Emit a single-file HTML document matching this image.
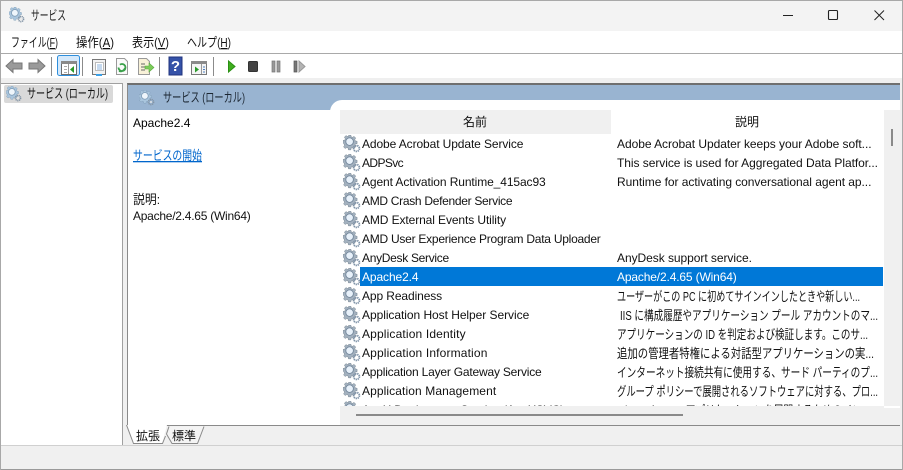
<!DOCTYPE html>
<html lang="ja"><head><meta charset="utf-8"><title>サービス</title>
<style>
html,body{margin:0;padding:0;width:903px;height:470px;overflow:hidden;background:#f0f0f0}
body{position:relative;font:12px/16px "Liberation Sans","Noto Sans CJK JP",sans-serif;color:#111}
.a{position:absolute;white-space:nowrap}
.b{position:absolute}
svg{position:absolute;overflow:visible}
svg text{font-family:"Liberation Sans","Noto Sans CJK JP",sans-serif;font-size:12px;fill:#111}
svg.jp{overflow:hidden;left:0;top:0}
svg.jp text{font-size:13px}
.row{position:absolute;left:0;width:543px;height:19px;line-height:19px}
.row svg{left:3px;top:1px}
.n{position:absolute;left:22px;top:1px;white-space:nowrap;letter-spacing:-.1px}
.d{position:absolute;left:277px;top:1px;white-space:nowrap;width:266px;overflow:hidden;letter-spacing:-.05px}
.sel{background:#0078d7;position:absolute;left:20px;top:0;width:523px;height:19px}
</style></head><body>
<svg width="0" height="0" style="position:absolute"><defs>
<symbol id="g" viewBox="0 0 18 18">
<path d="M6.800 0h3l.4 2.200 1.700.7 1.900-1.200 2.100 2.100-1.200 1.900.7 1.700 2.200.4v3l-2.200.4-.7 1.700 1.200 1.900-2.100 2.100-1.900-1.200-1.700.7-.4 2.200h-3l-.4-2.200-1.700-.7-1.900 1.200-2.100-2.100 1.200-1.900-.7-1.700L0 9.800v-3l2.200-.4.7-1.700-1.200-1.900 2.100-2.100 1.900 1.200 1.700-.7z" transform="scale(.8)" fill="#a3b1bf" stroke="#75848f" stroke-width=".6"/>
<circle cx="6.600" cy="6.600" r="3.800" fill="#e8f1fa" stroke="#73879b" stroke-width=".9"/>
<circle cx="13.500" cy="13.500" r="2.900" fill="none" stroke="#7f93a8" stroke-width="1.800" stroke-dasharray="1.300 .7"/>
<circle cx="13.500" cy="13.500" r="1.100" fill="#fff"/>
</symbol>
<symbol id="gl" viewBox="0 0 18 18">
<path d="M6.800 0h3l.4 2.200 1.700.7 1.900-1.200 2.100 2.100-1.200 1.900.7 1.700 2.200.4v3l-2.200.4-.7 1.700 1.200 1.900-2.100 2.100-1.900-1.200-1.700.7-.4 2.200h-3l-.4-2.200-1.700-.7-1.900 1.200-2.100-2.100 1.200-1.900-.7-1.700L0 9.800v-3l2.200-.4.7-1.700-1.200-1.900 2.100-2.100 1.900 1.200 1.700-.7z" transform="scale(.8)" fill="#a9c5dd" stroke="#7f9cb6" stroke-width=".6"/>
<circle cx="6.600" cy="6.600" r="3.800" fill="#eef5fb" stroke="#7d9ab4" stroke-width=".9"/>
<circle cx="13.500" cy="13.500" r="2.900" fill="none" stroke="#8394a5" stroke-width="1.800" stroke-dasharray="1.300 .7"/>
<circle cx="13.500" cy="13.500" r="1.100" fill="#e6e6e6"/>
</symbol>
</defs></svg>

<!-- window frame / title bar -->
<div class="b" style="left:0;top:0;width:903px;height:31px;background:#f3f3f3"></div>
<svg style="left:9px;top:7px" width="16" height="16"><use href="#gl" width="16" height="16"/></svg>
<div class="b" style="left:0;top:0;width:903px;height:1px;background:#a8a8a8"></div>
<svg style="left:780px;top:0" width="123" height="31" fill="none" stroke="#222" stroke-width="1">
<path d="M3 15.500h10"/><rect x="48.500" y="10.500" width="9" height="9" rx="1" stroke-width="1.100"/><path d="M94.500 10.500l9.500 9.500M104 10.500l-9.500 9.500"/>
</svg>

<!-- menu -->
<div class="b" style="left:0;top:31px;width:903px;height:22px;background:#fff;border-bottom:1px solid #a9a9a9"></div>

<!-- toolbar -->
<div class="b" style="left:0;top:54px;width:903px;height:24px;background:#fff"></div>
<svg style="left:0;top:54px" width="330" height="24">
<path d="M6 12l7-6.500v3.500h9v6h-9v3.500z" fill="#9a9a9a" stroke="#777"/>
<path d="M45 12l-7-6.500v3.500h-9v6h9v3.500z" fill="#9a9a9a" stroke="#777"/>
<path d="M51.500 3v19M82.500 3v19M159.500 3v19M213.500 3v19" stroke="#8b8b8b"/>
<rect x="57.500" y="1.500" width="22" height="20" rx="2" fill="#d5e9fb" stroke="#2f8fdc"/>
<rect x="61.500" y="7.500" width="15" height="13" fill="#fff" stroke="#6d6d6d"/><rect x="61" y="7" width="16" height="3" fill="#8a8a8a"/>
<path d="M68.500 10v10" stroke="#999"/><path d="M74 12v7l-4-3.500z" fill="#2a9a2a"/>
<path d="M64 12.500h3M64 15.500h3M64 18.500h3" stroke="#aaa"/>
<rect x="92.500" y="5.500" width="13" height="15" fill="#f2f2f2" stroke="#777"/><rect x="95.500" y="8.500" width="8" height="8" fill="#fff" stroke="#bbb"/>
<path d="M97 11h5M97 13h5M97 15h5" stroke="#8eb3dd"/><rect x="96" y="20" width="6" height="2" fill="#3aa0e8"/>
<path d="M116.500 4.500h8l3 3v13h-11z" fill="#fafafa" stroke="#999"/>
<path d="M118.500 13.500a3.500 3.500 0 1 0 1.400-2.800M119 17a4.500 4.500 0 0 0 6-3" fill="none" stroke="#3aa04a" stroke-width="1.800"/>
<path d="M138.500 4.500h8l3 3v13h-11z" fill="#f8f1d8" stroke="#999"/>
<path d="M141 10h4M141 13h4M141 16h4" stroke="#666"/>
<path d="M145 12h4V9l5 4.500-5 4.500v-3h-4z" fill="#7ccc5a" stroke="#5aaa40" stroke-width=".6"/>
<rect x="169" y="3" width="13" height="18" fill="#3552a8" stroke="#20337c"/>
<text x="175.500" y="17" style="font-size:15px;font-weight:bold;fill:#fff" text-anchor="middle">?</text>
<rect x="191.500" y="7.500" width="15" height="13" fill="#f4f4f4" stroke="#777"/><rect x="191" y="7" width="16" height="3" fill="#8a8a8a"/>
<path d="M201.500 10v10" stroke="#999"/><path d="M195 12.500v6l4-3z" fill="#2a9a2a"/><path d="M203 13h2M203 15.500h2M203 18h2" stroke="#4d7fc0"/>
<path d="M228.500 7v11l6.500-5.500z" fill="#3fae1f" stroke="#2a8f14"/>
<rect x="248.500" y="7.500" width="9" height="10" rx="1" fill="#444" stroke="#333"/>
<path d="M272 7h3v11h-3zM277 7h3v11h-3z" fill="#999" stroke="#777" stroke-width=".7"/>
<path d="M294 7h3v11h-3z" fill="#777" stroke="#555" stroke-width=".7"/><path d="M299 7v11l6-5.500z" fill="#b4b4b4" stroke="#999"/>
</svg>

<div class="b" style="left:0;top:78px;width:903px;height:5px;background:#efefef"></div>

<!-- left tree -->
<div class="b" style="left:0;top:83px;width:123px;height:362px;background:#fff;border-top:1px solid #a0a0a0;border-right:1px solid #a0a0a0;box-sizing:border-box"></div>
<div class="b" style="left:4px;top:85px;width:109px;height:18px;background:#d9d9d9;border-radius:2px"></div>
<svg style="left:6px;top:86px" width="16" height="16"><use href="#gl" width="16" height="16"/></svg>

<!-- right panel -->
<div class="b" style="left:127px;top:83px;width:773px;height:342px;background:#fff;border-top:2px solid #6f6f6f;border-left:1px solid #8a8a8a;box-sizing:border-box"></div>
<div class="b" style="left:128px;top:85px;width:772px;height:25px;background:#99b4d1"></div>
<div class="b" style="left:330px;top:100px;width:570px;height:15px;background:#fff;border-radius:12px 0 0 0"></div>
<svg style="left:139px;top:90px" width="16" height="16"><use href="#gl" width="16" height="16"/></svg>

<div class="a" style="left:133px;top:115px;color:#000">Apache2.4</div>
<div class="a" style="left:133px;top:208px;letter-spacing:-.25px">Apache/2.4.65 (Win64)</div>

<!-- list header -->
<div class="b" style="left:340px;top:110px;width:271px;height:24px;background:#f0f0f0"></div>
<div class="b" style="left:612px;top:110px;width:271px;height:24px;background:#fff"></div>
<div class="a" style="left:463px;top:114px">名前</div>
<div class="a" style="left:735px;top:114px">説明</div>

<!-- rows -->
<div class="b" style="left:340px;top:134px;width:543px;height:272px;overflow:hidden">
<div class="row" style="top:0"><svg width="18" height="18"><use href="#g" width="18" height="18"/></svg><span class="n">Adobe Acrobat Update Service</span><span class="d">Adobe Acrobat Updater keeps your Adobe soft...</span></div>
<div class="row" style="top:19px"><svg width="18" height="18"><use href="#g" width="18" height="18"/></svg><span class="n" style="letter-spacing:-.6px">ADPSvc</span><span class="d">This service is used for Aggregated Data Platfor...</span></div>
<div class="row" style="top:38px"><svg width="18" height="18"><use href="#g" width="18" height="18"/></svg><span class="n">Agent Activation Runtime_415ac93</span><span class="d">Runtime for activating conversational agent ap...</span></div>
<div class="row" style="top:57px"><svg width="18" height="18"><use href="#g" width="18" height="18"/></svg><span class="n" style="letter-spacing:-.3px">AMD Crash Defender Service</span></div>
<div class="row" style="top:76px"><svg width="18" height="18"><use href="#g" width="18" height="18"/></svg><span class="n">AMD External Events Utility</span></div>
<div class="row" style="top:95px"><svg width="18" height="18"><use href="#g" width="18" height="18"/></svg><span class="n" style="letter-spacing:-.25px">AMD User Experience Program Data Uploader</span></div>
<div class="row" style="top:114px"><svg width="18" height="18"><use href="#g" width="18" height="18"/></svg><span class="n" style="letter-spacing:-.3px">AnyDesk Service</span><span class="d">AnyDesk support service.</span></div>
<div class="row" style="top:133px"><svg width="18" height="18"><use href="#g" width="18" height="18"/></svg><div class="sel"></div><span class="n" style="color:#fff">Apache2.4</span><span class="d" style="color:#fff;letter-spacing:-.15px">Apache/2.4.65 (Win64)</span></div>
<div class="row" style="top:152px"><svg width="18" height="18"><use href="#g" width="18" height="18"/></svg><span class="n">App Readiness</span></div>
<div class="row" style="top:171px"><svg width="18" height="18"><use href="#g" width="18" height="18"/></svg><span class="n" style="letter-spacing:-.05px">Application Host Helper Service</span></div>
<div class="row" style="top:190px"><svg width="18" height="18"><use href="#g" width="18" height="18"/></svg><span class="n" style="letter-spacing:.15px">Application Identity</span></div>
<div class="row" style="top:209px"><svg width="18" height="18"><use href="#g" width="18" height="18"/></svg><span class="n" style="letter-spacing:.15px">Application Information</span></div>
<div class="row" style="top:228px"><svg width="18" height="18"><use href="#g" width="18" height="18"/></svg><span class="n" style="letter-spacing:-.2px">Application Layer Gateway Service</span></div>
<div class="row" style="top:247px"><svg width="18" height="18"><use href="#g" width="18" height="18"/></svg><span class="n" style="letter-spacing:.1px">Application Management</span></div>
<div class="row" style="top:266px"><svg width="18" height="18"><use href="#g" width="18" height="18"/></svg><span class="n">AppX Deployment Service (AppXSVC)</span></div>
</div>

<!-- Japanese description text, fitted to reference widths -->
<svg class="jp" width="903" height="470">
<text x="617" y="301" textLength="243" lengthAdjust="spacingAndGlyphs">ユーザーがこの PC に初めてサインインしたときや新しい...</text>
<text x="620" y="320" textLength="258" lengthAdjust="spacingAndGlyphs">IIS に構成履歴やアプリケーション プール アカウントのマ...</text>
<text x="617" y="339" textLength="251" lengthAdjust="spacingAndGlyphs">アプリケーションの ID を判定および検証します。このサ...</text>
<text x="617" y="358" textLength="257" lengthAdjust="spacingAndGlyphs">追加の管理者特権による対話型アプリケーションの実...</text>
<text x="617" y="377" textLength="261" lengthAdjust="spacingAndGlyphs">インターネット接続共有に使用する、サード パーティのプ...</text>
<text x="617" y="396" textLength="261" lengthAdjust="spacingAndGlyphs">グループ ポリシーで展開されるソフトウェアに対する、プロ...</text>
<text x="617" y="415" textLength="253" lengthAdjust="spacingAndGlyphs">Microsoft Store アプリケーションを展開するためのイン...</text>
</svg>

<!-- scrollbars -->
<div class="b" style="left:884px;top:110px;width:16px;height:296px;background:#f0f0f0"></div>
<div class="b" style="left:891px;top:129px;width:2px;height:17px;background:#8a8a8a"></div>
<div class="b" style="left:340px;top:408px;width:560px;height:17px;background:#f0f0f0"></div>
<div class="b" style="left:340px;top:406px;width:544px;height:2px;background:#f0f0f0"></div>
<div class="b" style="left:356px;top:414px;width:327px;height:2px;background:#8a8a8a"></div>

<!-- tabs strip -->
<div class="b" style="left:127px;top:425px;width:773px;height:20px;background:#f0f0f0;border-top:1px solid #8a8a8a;box-sizing:border-box"></div>
<svg style="left:126px;top:424px" width="90" height="21">
<path d="M1 1L7.500 19.500H36L41 1z" fill="#fff"/>
<path d="M.500 1L7.500 19.500H36.500L39.500 12" fill="none" stroke="#8a8a8a"/>
<path d="M43 2.500L40.500 10L46 19.500H71.500L78 2.500" fill="#f4f4f4" stroke="#8a8a8a"/>
</svg>
<div class="a" style="left:136px;top:428px">拡張</div>
<div class="a" style="left:172px;top:428px">標準</div>

<!-- status bar -->
<div class="b" style="left:0;top:445px;width:903px;height:1px;background:#d0d0d0"></div>
<div class="b" style="left:0;top:446px;width:903px;height:23px;background:#f0f0f0"></div>
<div class="b" style="left:0;top:469px;width:903px;height:1px;background:#9a9a9a"></div>
<div class="b" style="left:902px;top:0;width:1px;height:470px;background:#a8a8a8"></div>
<div class="b" style="left:0;top:0;width:1px;height:470px;background:#a8a8a8"></div>

<!-- Japanese UI labels, fitted to reference widths -->
<svg class="jp" width="903" height="470">
<text x="31" y="20" textLength="35" lengthAdjust="spacingAndGlyphs" style="fill:#222">サービス</text>
<text x="11" y="47" textLength="47" lengthAdjust="spacingAndGlyphs">ファイル(<tspan text-decoration="underline">F</tspan>)</text>
<text x="76" y="47" textLength="38" lengthAdjust="spacingAndGlyphs">操作(<tspan text-decoration="underline">A</tspan>)</text>
<text x="132" y="47" textLength="37" lengthAdjust="spacingAndGlyphs">表示(<tspan text-decoration="underline">V</tspan>)</text>
<text x="187" y="47" textLength="44" lengthAdjust="spacingAndGlyphs">ヘルプ(<tspan text-decoration="underline">H</tspan>)</text>
<text x="27" y="98" textLength="81" lengthAdjust="spacingAndGlyphs">サービス (ローカル)</text>
<text x="163" y="102" textLength="82" lengthAdjust="spacingAndGlyphs" style="fill:#1c2733">サービス (ローカル)</text>
<text x="133" y="160" textLength="69" lengthAdjust="spacingAndGlyphs" text-decoration="underline" style="fill:#0066cc">サービスの開始</text>
<text x="133" y="204" textLength="27" lengthAdjust="spacingAndGlyphs">説明:</text>
</svg>
</body></html>
